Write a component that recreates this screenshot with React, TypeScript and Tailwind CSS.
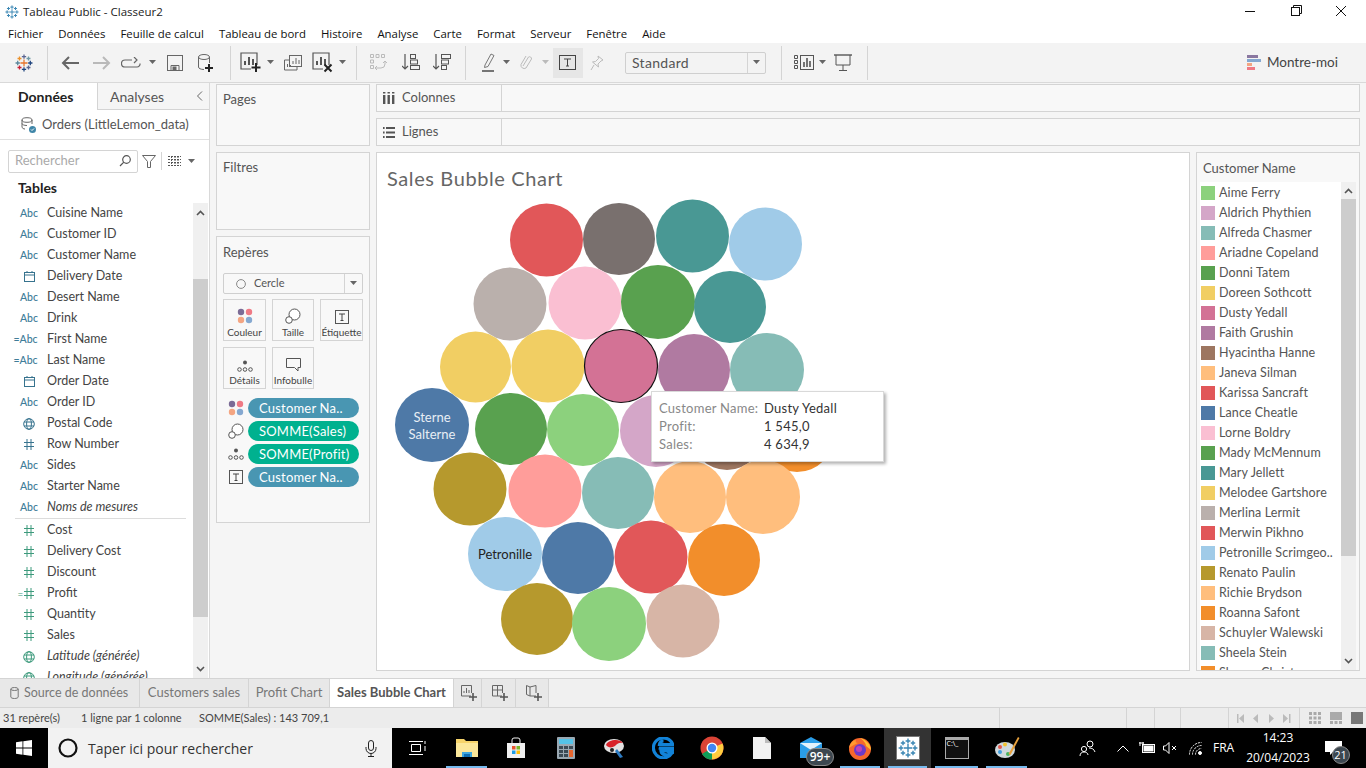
import React from 'react';

const tb = "font-['Lato','Liberation_Sans',sans-serif]";
const ui = "font-['Open_Sans','Liberation_Sans',sans-serif]";

const fields = [
  { t: 'abc', n: 'Cuisine Name' }, { t: 'abc', n: 'Customer ID' }, { t: 'abc', n: 'Customer Name' },
  { t: 'date', n: 'Delivery Date' }, { t: 'abc', n: 'Desert Name' }, { t: 'abc', n: 'Drink' },
  { t: 'calc', n: 'First Name' }, { t: 'calc', n: 'Last Name' }, { t: 'date', n: 'Order Date' },
  { t: 'abc', n: 'Order ID' }, { t: 'geo', n: 'Postal Code' }, { t: 'num', n: 'Row Number' },
  { t: 'abc', n: 'Sides' }, { t: 'abc', n: 'Starter Name' }, { t: 'abc', n: 'Noms de mesures', i: true },
];
const measures = [
  { t: 'mnum', n: 'Cost' }, { t: 'mnum', n: 'Delivery Cost' }, { t: 'mnum', n: 'Discount' },
  { t: 'mcalc', n: 'Profit' }, { t: 'mnum', n: 'Quantity' }, { t: 'mnum', n: 'Sales' },
  { t: 'mgeo', n: 'Latitude (générée)', i: true }, { t: 'mgeo', n: 'Longitude (générée)', i: true },
];

const legend: [string, string][] = [
  ['Aime Ferry', '#8cd17d'], ['Aldrich Phythien', '#d4a6c8'], ['Alfreda Chasmer', '#86bcb6'],
  ['Ariadne Copeland', '#ff9d9a'], ['Donni Tatem', '#59a14f'], ['Doreen Sothcott', '#f1ce63'],
  ['Dusty Yedall', '#d37295'], ['Faith Grushin', '#b07aa1'], ['Hyacintha Hanne', '#9d7660'],
  ['Janeva Silman', '#ffbe7d'], ['Karissa Sancraft', '#e15759'], ['Lance Cheatle', '#4e79a7'],
  ['Lorne Boldry', '#fabfd2'], ['Mady McMennum', '#59a14f'], ['Mary Jellett', '#499894'],
  ['Melodee Gartshore', '#f1ce63'], ['Merlina Lermit', '#bab0ac'], ['Merwin Pikhno', '#e15759'],
  ['Petronille Scrimgeo..', '#a0cbe8'], ['Renato Paulin', '#b6992d'], ['Richie Brydson', '#ffbe7d'],
  ['Roanna Safont', '#f28e2b'], ['Schuyler Walewski', '#d7b5a6'], ['Sheela Stein', '#86bcb6'],
  ['Sharon Christ..', '#f28e2b'],
];

// bubbles in page coordinates, the chart svg starts at 377,153
const bubbles: [number, number, number, string][] = [
  [546.5, 240, 36.5, '#e15759'], [619, 239, 36, '#79706e'], [692.5, 236, 36.5, '#499894'], [765.5, 244, 36.5, '#a0cbe8'],
  [510, 304, 36.5, '#bab0ac'], [585, 303, 36.5, '#fabfd2'], [658, 302, 37, '#59a14f'], [730, 307, 36, '#499894'],
  [475.5, 367, 35.5, '#f1ce63'], [548, 366, 36.5, '#f1ce63'], [694, 370, 36, '#b07aa1'], [767, 370, 37, '#86bcb6'],
  [432, 425, 37, '#4e79a7'], [511, 429, 36, '#59a14f'], [583, 430, 36, '#8cd17d'], [656, 431, 36, '#d4a6c8'],
  [727, 434, 36, '#9d7660'], [797, 435, 37, '#f28e2b'],
  [470, 489, 36.5, '#b6992d'], [545, 491, 36.5, '#ff9d9a'], [618, 493, 36, '#86bcb6'], [690, 497, 36, '#ffbe7d'], [763, 497, 37, '#ffbe7d'],
  [505, 554, 37, '#a0cbe8'], [578, 558, 36, '#4e79a7'], [651, 557, 36.5, '#e15759'], [724, 560, 36, '#f28e2b'],
  [537, 619, 36, '#b6992d'], [609, 624, 37, '#8cd17d'], [683, 621, 36.5, '#d7b5a6'],
];

const Caret = ({ c = '#666' }: { c?: string }) => (
  <svg width="8" height="5" viewBox="0 0 8 5"><path d="M0 0h7L3.500 4z" fill={c} /></svg>
);

const Cross = ({ x, y, s, c }: { x: number; y: number; s: number; c: string }) => (
  <path d={`M${x - s} ${y}H${x + s}M${x} ${y - s}V${y + s}`} stroke={c} strokeWidth="1.4" fill="none" />
);

const TableauLogo = ({ size = 18, mono }: { size?: number; mono?: string }) => (
  <svg width={size} height={size} viewBox="0 0 20 20">
    <Cross x={10} y={10} s={4} c={mono || '#e8762c'} />
    <Cross x={10} y={3} s={2.4} c={mono || '#5b6591'} />
    <Cross x={10} y={17} s={2.4} c={mono || '#1f447e'} />
    <Cross x={3} y={10} s={2.4} c={mono || '#59879b'} />
    <Cross x={17} y={10} s={2.4} c={mono || '#1f447e'} />
    <Cross x={5} y={5} s={2.2} c={mono || '#eb912b'} />
    <Cross x={15} y={5} s={2.2} c={mono || '#7099a6'} />
    <Cross x={5} y={15} s={2.2} c={mono || '#c72035'} />
    <Cross x={15} y={15} s={2.2} c={mono || '#5b6591'} />
  </svg>
);

const BarsBox = ({ extra }: { extra?: 'plus' | 'x' }) => (
  <svg width="22" height="24" viewBox="0 0 22 24" fill="none">
    <path d="M17 14V2H1v16h10" stroke="#555" strokeWidth="1.2" />
    <path d="M5 14v-4M9 14V6M13 14V8" stroke="#555" strokeWidth="2" />
    {extra === 'plus' && <path d="M16 12v9M11.500 16.500h9" stroke="#222" strokeWidth="2" />}
    {extra === 'x' && <path d="M12.500 13.500l7 7M19.500 13.500l-7 7" stroke="#222" strokeWidth="2" />}
  </svg>
);

const Divider = () => <div className="w-px h-[34px] bg-[#d4d4d4] shrink-0" />;

const FieldIcon = ({ t }: { t: string }) => {
  const m = t.startsWith('m');
  const c = m ? '#3d9a7c' : '#37738e';
  const k = m ? t.slice(1) : t;
  if (k === 'abc') return <span className={`${tb} text-[10.5px] font-medium text-[#3f7d99]`}>Abc</span>;
  if (t === 'calc') return <span className={`${tb} text-[10.5px] font-medium text-[#3f7d99] -ml-[7px]`}>=Abc</span>;
  if (k === 'date') return (
    <svg width="11" height="11" viewBox="0 0 11 11" fill="none" stroke={c}><rect x="0.5" y="1.5" width="10" height="9" /><path d="M0.5 4h10M3 0v2M8 0v2" /></svg>
  );
  if (k === 'geo') return (
    <svg width="12" height="12" viewBox="0 0 12 12" fill="none" stroke={c}><circle cx="6" cy="6" r="5.3" /><ellipse cx="6" cy="6" rx="2.4" ry="5.3" /><path d="M1 4h10M1 8h10" /></svg>
  );
  return (
    <span className="flex items-center gap-[1px]">
      {k === 'calc' && <span className="-ml-[6px] text-[10px] leading-none" style={{ color: c }}>=</span>}
      <svg width="10" height="11" viewBox="0 0 10 11" fill="none" stroke={c}><path d="M3 0v11M7 0v11M0 3.5h10M0 7.5h10" /></svg>
    </span>
  );
};

const ScrollArrow = ({ up }: { up?: boolean }) => (
  <svg width="9" height="6" viewBox="0 0 9 6" fill="none" stroke="#555" strokeWidth="1.6"><path d={up ? 'M1 5l3.5-3.5L8 5' : 'M1 1l3.5 3.5L8 1'} /></svg>
);

const Dots = () => (
  <svg width="16" height="16" viewBox="0 0 16 16"><circle cx="4" cy="4" r="3.2" fill="#7b6b96" /><circle cx="12" cy="4" r="3.2" fill="#ef7a85" /><circle cx="4" cy="12" r="3.2" fill="#f4a582" /><circle cx="12" cy="12" r="3.2" fill="#85a8d0" /></svg>
);
const SizeIcon = () => (
  <svg width="16" height="16" viewBox="0 0 16 16" fill="none" stroke="#555"><circle cx="9.5" cy="6.5" r="5.5" fill="#fff" /><circle cx="4" cy="12" r="3.3" fill="#fff" /></svg>
);
const LabelIcon = () => (
  <svg width="14" height="14" viewBox="0 0 14 14" fill="none"><rect x="0.5" y="0.5" width="13" height="13" stroke="#555" /><path d="M4 4h6M7 4v6.5M5.5 10.5h3" stroke="#444" /></svg>
);
const DetailIcon = () => (
  <svg width="16" height="12" viewBox="0 0 16 12" fill="none"><circle cx="8" cy="2.5" r="2" fill="#555" /><circle cx="2.5" cy="9.5" r="1.8" stroke="#555" /><circle cx="8" cy="9.5" r="1.8" stroke="#555" /><circle cx="13.5" cy="9.5" r="1.8" stroke="#555" /></svg>
);
const TipIcon = () => (
  <svg width="15" height="14" viewBox="0 0 15 14" fill="none" stroke="#555"><path d="M0.5 0.5h14v9h-2.5v3.5l-3.5-3.5h-8z" /></svg>
);

const Mark = ({ label, children, cls }: { label: string; children: React.ReactNode; cls: string }) => (
  <div className={`${cls} h-[42px] border border-[#d4d4d4] flex flex-col items-center`}>
    <div className="h-[24px] flex items-end">{children}</div>
    <span className="text-[10px] text-[#444] mt-[2px] leading-[13px] whitespace-nowrap">{label}</span>
  </div>
);

const Pill = ({ icon, label, green }: { icon: React.ReactNode; label: string; green?: boolean }) => (
  <div className="flex items-center h-[20px] mb-[3px]">
    <div className="w-[25px] flex justify-center">{icon}</div>
    <div className={`w-[111px] h-[20px] rounded-full px-[11px] text-[13px] leading-[20px] text-white whitespace-nowrap tracking-[0.2px] ${green ? 'bg-[#00b18f]' : 'bg-[#4996b2]'}`}>{label}</div>
  </div>
);

const Panel = ({ title, cls }: { title: string; cls: string }) => (
  <div className={`${cls} bg-[#f8f8f8] border border-[#d4d4d4] px-[6px] pt-[5px] text-[13px] text-[#555]`}>{title}</div>
);

const Shelf = ({ label, icon }: { label: string; icon: React.ReactNode }) => (
  <div className="h-[28px] flex bg-[#f8f8f8] border border-[#d4d4d4]">
    <div className="w-[125px] border-r border-[#d4d4d4] flex items-center pl-[6px] gap-[7px] text-[13px] text-[#555]">{icon}{label}</div>
  </div>
);

const TaskIcon = ({ children, w, active, line }: { children: React.ReactNode; w: string; active?: boolean; line?: boolean }) => (
  <div className={`${w} relative h-full flex items-center justify-center shrink-0 ${active ? 'bg-[#333333]' : ''}`}>
    {children}
    {line && <div className="absolute bottom-0 left-[4px] right-[4px] h-[2px] bg-[#76b9ed]" />}
  </div>
);

export default function App() {
  return (
    <div className={`w-[1366px] h-[768px] overflow-hidden bg-[#f5f5f5] flex flex-col ${tb}`}>
      {/* title bar */}
      <div className={`h-[22px] pt-[2px] bg-white flex items-center shrink-0 ${ui}`}>
        <div className="w-[23px] flex justify-center"><TableauLogo size={14} mono="#3b87b4" /></div>
        <span className="text-[11.5px] text-[#222]">Tableau Public - Classeur2</span>
        <div className="ml-auto flex items-center -mt-[2px]">
          <svg width="46" height="12" viewBox="0 0 46 12" fill="none" stroke="#111"><path d="M18 6.5h10" /></svg>
          <svg width="46" height="12" viewBox="0 0 46 12" fill="none" stroke="#111"><rect x="18.5" y="2.5" width="8" height="8" /><path d="M20.5 2.5v-2h8v8h-2" /></svg>
          <svg width="46" height="12" viewBox="0 0 46 12" fill="none" stroke="#111" className="mr-[1px]"><path d="M17 1l10 10M27 1L17 11" /></svg>
        </div>
      </div>
      {/* menu */}
      <div className={`h-[21px] pt-[2px] bg-white flex items-center pl-[8px] gap-[15px] text-[11.4px] text-[#111] shrink-0 ${ui}`}>
        {['Fichier', 'Données', 'Feuille de calcul', 'Tableau de bord', 'Histoire', 'Analyse', 'Carte', 'Format', 'Serveur', 'Fenêtre', 'Aide'].map(m => <span key={m}>{m}</span>)}
      </div>
      {/* toolbar */}
      <div className="h-[40px] bg-[#f3f3f3] flex items-center shrink-0 border-b border-[#d9d9d9]">
        <div className="w-[47px] flex justify-center"><TableauLogo /></div>
        <Divider />
        <div className="w-[44px] flex justify-center">
          <svg width="18" height="14" viewBox="0 0 18 14" fill="none" stroke="#666" strokeWidth="2"><path d="M18 7H2M8 1L2 7l6 6" /></svg>
        </div>
        <div className="w-[20px] flex justify-center">
          <svg width="18" height="14" viewBox="0 0 18 14" fill="none" stroke="#b9b9b9" strokeWidth="2"><path d="M0 7h16M10 1l6 6-6 6" /></svg>
        </div>
        <div className="w-[37px] flex justify-center">
          <svg width="20" height="12" viewBox="0 0 20 12" fill="none" stroke="#666" strokeWidth="1.2"><path d="M11 3H4a3 3 0 000 7h12a3 3 0 003-3.5M13 0l3 3-3 3" /></svg>
        </div>
        <div className="w-[8px] flex justify-center"><Caret /></div>
        <div className="w-[36px] flex justify-center">
          <svg width="16" height="16" viewBox="0 0 16 16" fill="none" stroke="#666"><rect x="0.5" y="0.5" width="15" height="15" /><path d="M4 15.5v-5h8v5" /><rect x="6" y="12" width="3" height="3" fill="#666" /></svg>
        </div>
        <div className="w-[26px] flex justify-center">
          <svg width="16" height="18" viewBox="0 0 16 18" fill="none"><ellipse cx="6" cy="3" rx="5.5" ry="2.5" stroke="#666" /><path d="M.5 3v10c0 1.400 2.200 2.500 5.500 2.500M11.500 3v6" stroke="#666" /><path d="M11 10v8M7 14h8" stroke="#222" strokeWidth="2" /></svg>
        </div>
        <div className="w-[11px]" />
        <Divider />
        <div className="w-[36px] pl-[3px] flex justify-center"><BarsBox extra="plus" /></div>
        <div className="w-[8px] flex justify-center"><Caret /></div>
        <div className="w-[36px] flex justify-center">
          <svg width="18" height="16" viewBox="0 0 18 16" fill="none" stroke="#666"><rect x="5.5" y="0.5" width="12" height="11" fill="#f3f3f3" /><path d="M9 9V6M12 9V3M15 9V5" /><path d="M5 5H.5v10H13v-3" /><path d="M3.5 12v-3M6.5 12v-2" /></svg>
        </div>
        <div className="w-[24px] flex justify-center"><BarsBox extra="x" /></div>
        <div className="w-[8px] ml-[4px] flex justify-center"><Caret /></div>
        <div className="w-[9px]" />
        <Divider />
        <div className="w-[43px] flex justify-center">
          <svg width="17" height="17" viewBox="0 0 17 17" fill="none" stroke="#bbb"><path d="M0.5 0.5h3v3h-3zM6 .5h3v3H6zM11.500.5h3v3h-3zM.5 6h3v3h-3zM.5 11.500h3v3h-3z" /><path d="M5 14h6a4 4 0 004-4V7M13 9l2-2 2 2M7 12l-2 2 2 2" /></svg>
        </div>
        <div className="w-[22px] flex justify-center">
          <svg width="18" height="17" viewBox="0 0 18 17" fill="none" stroke="#555"><path d="M3 0v15M0 12l3 3 3-3" strokeWidth="1.2" /><rect x="8.5" y="0.5" width="5" height="4" /><rect x="8.5" y="6" width="7" height="4" /><rect x="8.5" y="11.5" width="9" height="4" /></svg>
        </div>
        <div className="w-[40px] flex justify-center">
          <svg width="18" height="17" viewBox="0 0 18 17" fill="none" stroke="#555"><path d="M3 0v15M0 12l3 3 3-3" strokeWidth="1.2" /><rect x="8.5" y="0.5" width="9" height="4" /><rect x="8.5" y="6" width="7" height="4" /><rect x="8.5" y="11.5" width="5" height="4" /></svg>
        </div>
        <div className="w-[3px]" />
        <Divider />
        <div className="w-[35px] flex justify-end pr-[4px]">
          <svg width="16" height="19" viewBox="0 0 16 19" fill="none"><path d="M4 12L10 1l3 1.500-6 11-3.500 1z" stroke="#777" /><path d="M1 18h12" stroke="#555" strokeWidth="1.6" /></svg>
        </div>
        <div className="w-[8px] ml-[2px] flex justify-center"><Caret /></div>
        <div className="w-[31px] flex justify-center">
          <svg width="13" height="17" viewBox="0 0 13 17" fill="none" stroke="#bbb"><path d="M3 12L8.500 3a2 2 0 013 2L6 14a3.300 3.300 0 01-5-3.500L6 2" /></svg>
        </div>
        <div className="w-[8px] flex justify-center"><Caret c="#bbb" /></div>
        <div className="w-[3px]" />
        <div className="w-[30px] h-[30px] bg-[#e6e6e6] flex items-center justify-center">
          <svg width="18" height="16" viewBox="0 0 18 16" fill="none"><rect x="0.5" y="0.5" width="16" height="14" stroke="#444" /><path d="M5 4h7M8.500 4v7M7 11h3" stroke="#444" /></svg>
        </div>
        <div className="w-[28px] flex justify-center">
          <svg width="14" height="16" viewBox="0 0 14 16" fill="none" stroke="#bbb"><path d="M8 1l5 4-2 1-3 3 .5 3-6-5 3-.5 3-3zM4 10L1 15" /></svg>
        </div>
        <div className="w-[14px]" />
        <div className="w-[141px] h-[22px] bg-[#f3f3f3] border border-[#cfcfcf] rounded-[2px] flex items-center text-[14px] text-[#555] tracking-[0.3px]">
          <span className="flex-1 pl-[6px]">Standard</span>
          <div className="w-[18px] h-full border-l border-[#d4d4d4] flex items-center justify-center"><Caret /></div>
        </div>
        <div className="w-[15px]" />
        <Divider />
        <div className="w-[30px] ml-[7px] flex justify-center">
          <svg width="20" height="15" viewBox="0 0 20 15" fill="none" stroke="#555"><path d="M.5 .5h3v3h-3zM.5 5.500h3v3h-3zM.5 10.500h3v3h-3z" /><rect x="6.5" y="0.5" width="13" height="14" /><path d="M10 12V7M13 12V3M16 12V6" strokeWidth="1.6" /></svg>
        </div>
        <div className="w-[8px] flex justify-center"><Caret /></div>
        <div className="w-[30px] ml-[1px] flex justify-center">
          <svg width="18" height="17" viewBox="0 0 18 17" fill="none" stroke="#555"><path d="M0 1h18" strokeWidth="1.4" /><path d="M2 1v10h14V1M9 11v5M5 16.500h8" /></svg>
        </div>
        <div className="w-[9px]" />
        <Divider />
        <div className="ml-auto flex items-center mr-[28px] gap-[6px]">
          <div className="w-[14px] flex flex-col gap-[1px]">
            <div className="w-[11px] h-[3px] bg-[#8a77a0]" /><div className="w-[14px] h-[3px] bg-[#85a8d0]" /><div className="w-[5px] h-[3px] bg-[#f4a582]" /><div className="w-[8px] h-[3px] bg-[#ef7a85]" />
          </div>
          <span className="text-[13.5px] text-[#444]">Montre-moi</span>
        </div>
      </div>
      {/* main */}
      <div className="h-[595px] flex shrink-0">
        {/* data pane */}
        <div className="w-[210px] bg-white border-r border-[#d9d9d9] flex flex-col shrink-0">
          <div className="h-[27px] flex items-center text-[14px]">
            <div className="w-[98px] h-full flex items-center pl-[18px] font-bold text-[#222] border-r border-[#d4d4d4]">Données</div>
            <div className="flex-1 h-full flex items-center justify-between pl-[12px] pr-[6px] bg-[#f5f5f5] border-b border-[#d4d4d4] text-[#555]">
              Analyses
              <svg width="7" height="10" viewBox="0 0 7 10" fill="none" stroke="#666"><path d="M6 .5L1.500 5 6 9.500" /></svg>
            </div>
          </div>
          <div className="h-[30px] flex items-center pl-[20px] gap-[5px] border-b border-[#e0e0e0] text-[13px] text-[#555] whitespace-nowrap">
            <svg width="17" height="16" viewBox="0 0 17 16" fill="none"><ellipse cx="7" cy="3" rx="5" ry="2.300" stroke="#666" /><path d="M2 3v7c0 1 1.500 2 3 2M12 3v4M2 6.500c0 1 2 2 5 2" stroke="#666" /><circle cx="12.500" cy="12.500" r="3.500" fill="#3f86a8" /><path d="M11 12.500l1 1 2-2" stroke="#fff" /></svg>
            Orders (LittleLemon_data)
          </div>
          <div className="h-[40px] flex items-center pl-[8px] pt-[2px]">
            <div className="w-[130px] h-[23px] border border-[#d4d4d4] rounded-[2px] flex items-center justify-between px-[6px] text-[13px] text-[#aaa]">
              Rechercher
              <svg width="12" height="12" viewBox="0 0 12 12" fill="none" stroke="#555" strokeWidth="1.2"><circle cx="7.500" cy="4.500" r="3.800" /><path d="M4.800 7.200L1 11" /></svg>
            </div>
            <svg width="14" height="13" viewBox="0 0 14 13" fill="none" stroke="#666" className="ml-[4px]"><path d="M.5.5h13L8.500 6.500v6h-3v-6z" /></svg>
            <div className="w-px h-[18px] bg-[#d4d4d4] ml-[5px]" />
            <svg width="13" height="10" viewBox="0 0 13 10" fill="none" stroke="#555" className="ml-[6px]"><path d="M0 .5h13M0 3.500h13M0 6.500h13M0 9.500h13M3.500 0v10M7 0v10M10 0v10" strokeDasharray="2 1" /></svg>
            <div className="ml-[7px]"><Caret /></div>
          </div>
          <div className="h-[21px] flex items-center pl-[18px] text-[14px] font-bold text-[#222] -mt-[3px] mb-[5px]">Tables</div>
          <div className="flex flex-1 min-h-0 pr-[1px]">
            <div className="flex-1 overflow-hidden text-[12.5px] text-[#444] pl-[15px]">
              {fields.map(f => (
                <div key={f.n} className="h-[21px] flex items-center">
                  <div className="w-[28px] flex justify-center"><FieldIcon t={f.t} /></div>
                  <span className={`ml-[4px] whitespace-nowrap ${f.i ? 'italic' : ''}`}>{f.n}</span>
                </div>
              ))}
              <div className="h-px mb-[1px] bg-[#dcdcdc] mr-[7px]" />
              {measures.map(f => (
                <div key={f.n} className="h-[21px] flex items-center">
                  <div className="w-[28px] flex justify-center"><FieldIcon t={f.t} /></div>
                  <span className={`ml-[4px] whitespace-nowrap ${f.i ? 'italic' : ''}`}>{f.n}</span>
                </div>
              ))}
            </div>
            <div className="w-[15px] bg-[#f0f0f0] flex flex-col items-center shrink-0">
              <div className="h-[76px] w-full pt-[7px] flex justify-center"><ScrollArrow up /></div>
              <div className="h-[338px] w-full bg-[#cdcdcd]" />
              <div className="flex-1 w-full flex items-end justify-center pb-[6px]"><ScrollArrow /></div>
            </div>
          </div>
        </div>
        {/* shelves column */}
        <div className="w-[166px] px-[6px] pt-[1px] flex flex-col gap-[6px] shrink-0">
          <Panel title="Pages" cls="h-[62px]" />
          <Panel title="Filtres" cls="h-[78px]" />
          <div className="h-[287px] bg-[#f8f8f8] border border-[#d4d4d4] px-[6px] pt-[7px]">
            <div className="text-[13px] text-[#555] leading-[16px]">Repères</div>
            <div className="h-[21px] mt-[13px] border border-[#cfcfcf] rounded-[2px] flex items-center text-[11px] text-[#555]">
              <svg width="10" height="10" viewBox="0 0 10 10" fill="none" stroke="#888" className="ml-[12px] mr-[8px]"><circle cx="5" cy="5" r="4.400" /></svg>
              Cercle
              <div className="ml-auto w-[18px] h-full border-l border-[#d4d4d4] flex items-center justify-center"><Caret /></div>
            </div>
            <div className="flex gap-[6px] mt-[5px]">
              <Mark label="Couleur" cls="w-[43px]"><Dots /></Mark>
              <Mark label="Taille" cls="w-[42px]"><SizeIcon /></Mark>
              <Mark label="Étiquette" cls="w-[43px]"><LabelIcon /></Mark>
            </div>
            <div className="flex gap-[6px] mt-[6px]">
              <Mark label="Détails" cls="w-[43px]"><DetailIcon /></Mark>
              <Mark label="Infobulle" cls="w-[42px]"><TipIcon /></Mark>
            </div>
            <div className="mt-[9px]">
              <Pill icon={<Dots />} label="Customer Na.." />
              <Pill icon={<SizeIcon />} label="SOMME(Sales)" green />
              <Pill icon={<DetailIcon />} label="SOMME(Profit)" green />
              <Pill icon={<LabelIcon />} label="Customer Na.." />
            </div>
          </div>
        </div>
        {/* view column */}
        <div className="flex-1 pt-[1px] pr-[6px] flex flex-col gap-[6px] min-w-0">
          <Shelf label="Colonnes" icon={<svg width="12" height="12" viewBox="0 0 12 12" fill="#555"><path d="M0 3h2.400v9H0zM4.500 3h2.400v9H4.500zM9 3h2.400v9H9zM0 0h2.400v1.500H0zM4.500 0h2.400v1.500H4.500zM9 0h2.400v1.500H9z" /></svg>} />
          <Shelf label="Lignes" icon={<svg width="12" height="11" viewBox="0 0 12 11" fill="#555"><path d="M3 0h9v2H3zM3 4.500h9v2H3zM3 9h9v2H3zM0 0h1.600v2H0zM0 4.500h1.600v2H0zM0 9h1.600v2H0z" /></svg>} />
          <div className="flex-1 flex gap-[6px] min-h-0 mb-[7px]">
            <div className="w-[814px] bg-white border border-[#d4d4d4] relative shrink-0">
              <div className="pl-[10px] pt-[12px] text-[20px] leading-[26px] text-[#666] tracking-[0.6px]">Sales Bubble Chart</div>
              <svg width="812" height="517" viewBox="377 153 812 517" className="absolute left-0 top-0">
                {bubbles.map((b, i) => <circle key={i} cx={b[0]} cy={b[1]} r={b[2]} fill={b[3]} />)}
                <circle cx="621" cy="366" r="36.5" fill="#d37295" stroke="#111" strokeWidth="1.2" />
                <text x="432" y="422" textAnchor="middle" fontSize="13" fill="#e8eef5">Sterne</text>
                <text x="432" y="439" textAnchor="middle" fontSize="13" fill="#e8eef5">Salterne</text>
                <text x="505" y="559" textAnchor="middle" fontSize="13" fill="#222">Petronille</text>
              </svg>
              {/* tooltip */}
              <div className="absolute left-[274px] top-[238px] w-[233px] h-[71px] bg-white border border-[#d9d9d9] shadow-[2px_2px_3px_rgba(0,0,0,0.3)] pl-[7px] pt-[7px] text-[13px] leading-[18px] tracking-[0.25px]">
                <div className="flex"><span className="w-[105px] text-[#888]">Customer Name:</span><span className="text-[#333]">Dusty Yedall</span></div>
                <div className="flex"><span className="w-[105px] text-[#888]">Profit:</span><span className="text-[#333]">1 545,0</span></div>
                <div className="flex"><span className="w-[105px] text-[#888]">Sales:</span><span className="text-[#333]">4 634,9</span></div>
              </div>
            </div>
            <div className="flex-1 bg-[#f8f8f8] border border-[#d4d4d4] pl-[3px] pr-[3px] flex flex-col min-w-0">
              <div className="h-[29px] pt-[2px] flex items-center pl-[3px] text-[13px] text-[#555] shrink-0">Customer Name</div>
              <div className="flex-1 bg-white flex min-h-0">
                <div className="flex-1 overflow-hidden pt-[1px]">
                  {legend.map(([n, c]) => (
                    <div key={n} className="h-[20px] flex items-center text-[12.5px] text-[#555] whitespace-nowrap tracking-[0.1px]">
                      <div className="w-[14px] h-[14px] ml-[1px] mr-[4px] shrink-0" style={{ backgroundColor: c }} />
                      {n}
                    </div>
                  ))}
                </div>
                <div className="w-[15px] bg-[#f0f0f0] flex flex-col items-center shrink-0">
                  <div className="h-[17px] w-full pt-[6px] flex justify-center"><ScrollArrow up /></div>
                  <div className="h-[357px] w-full bg-[#cdcdcd]" />
                  <div className="flex-1 w-full flex items-end justify-center pb-[6px]"><ScrollArrow /></div>
                </div>
              </div>
            </div>
          </div>
        </div>
      </div>
      {/* sheet tabs */}
      <div className="h-[30px] flex bg-[#f0f0f0] border-t border-b border-[#d4d4d4] text-[13px] text-[#777] shrink-0">
        <div className="w-[140px] flex items-center pl-[10px] gap-[5px] bg-[#e8e8e8] border-r border-[#d4d4d4] whitespace-nowrap">
          <svg width="9" height="12" viewBox="0 0 9 12" fill="none" stroke="#777"><ellipse cx="4.500" cy="2" rx="3.700" ry="1.500" /><path d="M.8 2v8c0 .8 1.600 1.500 3.700 1.500S8.200 10.800 8.200 10V2" /></svg>
          <span className="text-[12.5px]">Source de données</span>
        </div>
        <div className="w-[109px] flex items-center justify-center bg-[#e8e8e8] border-r border-[#d4d4d4]">Customers sales</div>
        <div className="w-[81px] flex items-center justify-center bg-[#e8e8e8] border-r border-[#d4d4d4]">Profit Chart</div>
        <div className="w-[124px] flex items-center justify-center bg-white font-bold text-[#555] border-r border-[#d4d4d4]">Sales Bubble Chart</div>
        {[['sheet', 'w-[28px]'], ['dash', 'w-[34px]'], ['story', 'w-[33px]']].map(([k, w]) => (
          <div key={k} className={`${w} pl-[3px] flex items-center justify-center bg-[#e8e8e8] border-r border-[#d4d4d4]`}>
            <svg width="16" height="16" viewBox="0 0 16 16" fill="none">
              {k === 'sheet' && <path d="M10 11H.5V.5h10V8M3 8V6M5.500 8V3M8 8V5" stroke="#666" />}
              {k === 'dash' && <path d="M10 11H.5V.5h10V8M.5 5h10M5.500 .5V11" stroke="#666" />}
              {k === 'story' && <path d="M10 11H4L.5 9.500v-9l3.500 1.500 6-1.500V8M4 2v9" stroke="#666" />}
              <path d="M12 8v8M8 12h8" stroke="#555" strokeWidth="1.600" />
            </svg>
          </div>
        ))}
      </div>
      {/* status bar */}
      <div className="h-[20px] flex items-center bg-[#ececec] text-[11px] text-[#444] pl-[3px] shrink-0">
        <span className="w-[78px]">31 repère(s)</span>
        <span className="w-[118px]">1 ligne par 1 colonne</span>
        <span className="w-[800px]">SOMME(Sales) : 143 709,1</span>
        {['w-[127px]', 'w-[28px]', 'w-[26px]', 'w-[48px]'].map((w, i) => <div key={i} className={`${w} h-full border-l border-[#d4d4d4]`} />)}
        <div className="w-[71px] h-full border-l border-[#d4d4d4] flex items-center justify-center">
          <svg width="54" height="9" viewBox="0 0 54 9" fill="#bbb"><path d="M0 0h1.500v9H0zM7 0v9L2 4.500zM21 0v9L16 4.500zM32 0v9l5-4.500zM46 0v9l5-4.500zM52 0h1.500v9H52z" /></svg>
        </div>
        <div className="flex-1 h-full border-l border-[#d4d4d4] flex items-center gap-[9px] pl-[9px]">
          <svg width="12" height="12" viewBox="0 0 12 12" fill="#aaa"><path d="M0 0h3v3H0zM4.500 0h3v3h-3zM9 0h3v3H9zM0 4.500h3v3H0zM4.500 4.500h3v3h-3zM9 4.500h3v3H9zM0 9h3v3H0zM4.500 9h3v3h-3zM9 9h3v3H9z" /></svg>
          <svg width="12" height="12" viewBox="0 0 12 12" fill="#aaa"><path d="M0 0h12v8H0zM0 9h3v3H0zM4.500 9h3v3h-3zM9 9h3v3H9z" /></svg>
          <div className="w-[12px] h-[12px] bg-[#777]" />
        </div>
      </div>
      {/* taskbar */}
      <div className={`h-[40px] bg-black flex items-center text-white shrink-0 ${ui}`}>
        <div className="w-[48px] flex justify-center">
          <svg width="16" height="16" viewBox="0 0 16 16" fill="#fff"><path d="M0 2.300l6.500-1v6.300H0zM7.300 1.200L16 0v7.600H7.300zM0 8.400h6.500v6.300l-6.500-1zM7.300 8.400H16V16l-8.700-1.200z" /></svg>
        </div>
        <div className="w-[344px] h-full bg-[#f2f2f2] flex items-center pl-[10px] text-[#333] text-[14px]">
          <svg width="20" height="20" viewBox="0 0 20 20" fill="none" stroke="#111" strokeWidth="2.200"><circle cx="10" cy="10" r="8.500" /></svg>
          <span className="ml-[10px]">Taper ici pour rechercher</span>
          <svg width="12" height="17" viewBox="0 0 12 17" fill="none" stroke="#222" className="ml-auto mr-[15px]"><rect x="3.500" y="0.500" width="5" height="10" rx="2.500" /><path d="M1 7v1.500a5 5 0 0010 0V7M6 13.500V16M3 16.500h6" /></svg>
        </div>
        <TaskIcon w="w-[50px]">
          <svg width="17" height="16" viewBox="0 0 17 16" fill="none" stroke="#fff"><path d="M2.500 4.500h9v7h-9zM0 1.500h14M0 14.500h14M16 1v3M16 6v5" /></svg>
        </TaskIcon>
        <TaskIcon w="w-[49px]" line>
          <svg width="22" height="20" viewBox="0 0 22 20"><path d="M0 1h8l2 2h12v16H0z" fill="#f6d46b" /><path d="M0 5h22v14H0z" fill="#fbe79a" /><path d="M6 19v-5h10v5z" fill="#3fa7e0" /><path d="M8 19v-3h6v3z" fill="#0c6db3" /></svg>
        </TaskIcon>
        <TaskIcon w="w-[50px]">
          <svg width="22" height="22" viewBox="0 0 22 22"><path d="M2 6h18v15H2z" fill="#f0f0f0" /><path d="M7 6V3a2 2 0 012-2h4a2 2 0 012 2v3" fill="none" stroke="#f0f0f0" /><path d="M7 9h3.500v3.500H7z" fill="#e8542f" /><path d="M11.500 9H15v3.500h-3.500z" fill="#7cb928" /><path d="M7 13.500h3.500V17H7z" fill="#1c9be6" /><path d="M11.500 13.500H15V17h-3.500z" fill="#fbbc09" /></svg>
        </TaskIcon>
        <TaskIcon w="w-[49px]">
          <svg width="18" height="22" viewBox="0 0 18 22"><rect width="18" height="22" rx="1" fill="#9aa8b2" /><rect x="2" y="2" width="14" height="5" fill="#54c3e8" /><path d="M2 9h4v3H2zM7 9h4v3H7zM12 9h4v3h-4zM2 13h4v3H2zM7 13h4v3H7zM2 17h4v3H2zM7 17h4v3H7z" fill="#3b4a55" /><path d="M12 13h4v7h-4z" fill="#e8662f" /></svg>
        </TaskIcon>
        <TaskIcon w="w-[49px]">
          <svg width="24" height="24" viewBox="0 0 24 24"><ellipse cx="11" cy="10" rx="10" ry="7" fill="#e2e2e2" /><path d="M3 9c2-5 13-7 17-2-4-1-6 1-8 3-3 2-7 2-9-1z" fill="#d8232a" /><path d="M14 13l6 8-3 1-5-7z" fill="#2d7cc4" /><circle cx="9" cy="14" r="2" fill="#222" /></svg>
        </TaskIcon>
        <TaskIcon w="w-[48px]">
          <svg width="22" height="22" viewBox="0 0 22 22" fill="none"><path d="M20 16a10 10 0 11.800-8.500H7.500a4 4 0 014-3.500M7 11h14.500c0 0 .5 3-2 3H9c.5 4 6 5 11 2z" stroke="#1283d8" strokeWidth="3.200" /></svg>
        </TaskIcon>
        <TaskIcon w="w-[50px]">
          <svg width="24" height="24" viewBox="0 0 24 24"><circle cx="12" cy="12" r="11.500" fill="#db4437" /><path d="M12 12L2 18a11.500 11.500 0 0010 5.500z" fill="#0f9d58" /><path d="M12 12l10.500-4.500a11.500 11.500 0 01-10.500 16z" fill="#ffcd40" /><circle cx="12" cy="12" r="5.500" fill="#fff" /><circle cx="12" cy="12" r="4.200" fill="#4285f4" /></svg>
        </TaskIcon>
        <TaskIcon w="w-[49px]">
          <svg width="18" height="22" viewBox="0 0 18 22"><path d="M0 0h12l6 6v16H0z" fill="#f2f2f2" /><path d="M12 0v6h6z" fill="#bdbdbd" /></svg>
        </TaskIcon>
        <TaskIcon w="w-[50px]">
          <div className="relative">
            <svg width="24" height="24" viewBox="0 0 24 24"><path d="M1 7l11-6 11 6v15H1z" fill="#2a9de8" /><path d="M1 7l11 7 11-7" fill="#e4f2fb" /></svg>
            <div className="absolute -right-[11px] bottom-[-6px] w-[28px] h-[18px] rounded-full bg-[#3c4750] border border-[#8a8a8a] text-[12px] font-semibold leading-[16px] text-center">99+</div>
          </div>
        </TaskIcon>
        <TaskIcon w="w-[48px]" line>
          <svg width="24" height="24" viewBox="0 0 24 24"><circle cx="12" cy="13" r="11" fill="#f5672c" /><path d="M12 2c5 1 11 6 11 12l-5-4c0-3-3-6-6-8z" fill="#ffbd2e" /><path d="M1 12c1-5 4-8 7-8-1 2 0 3 2 3-3 1-6 3-9 5z" fill="#ff9a2e" /><circle cx="12" cy="14" r="6" fill="#6c3ac8" /><circle cx="11" cy="13" r="3" fill="#c042b8" /></svg>
        </TaskIcon>
        <TaskIcon w="w-[47px]" active line>
          <div className="w-[24px] h-[24px] bg-white border border-[#777] flex items-center justify-center"><TableauLogo size={20} mono="#3b87b4" /></div>
        </TaskIcon>
        <TaskIcon w="w-[51px]" line>
          <div className="w-[24px] h-[22px] bg-[#111] border border-[#aaa] border-t-[3px] text-[7px] leading-[8px] pl-[1px]">C:\_</div>
        </TaskIcon>
        <TaskIcon w="w-[49px]" line>
          <svg width="26" height="24" viewBox="0 0 26 24"><ellipse cx="11" cy="14" rx="10" ry="8" fill="#cfd9dd" /><circle cx="6" cy="11" r="2" fill="#e2574c" /><circle cx="11" cy="8.500" r="2" fill="#f2c230" /><circle cx="6" cy="16" r="2" fill="#3f9fe0" /><circle cx="14" cy="18" r="2" fill="#46b35f" /><path d="M24 1l1.500 1-9 17-2-1z" fill="#e8a13c" /></svg>
        </TaskIcon>
        <div className="flex-1" />
        <svg width="17" height="17" viewBox="0 0 17 17" fill="none" stroke="#fff" className="mr-[21px]"><circle cx="11" cy="4" r="3" /><circle cx="5" cy="9" r="2.600" /><path d="M1 16c0-3 2-4 4-4s4 1 4 3M10 8c3 0 5 1 6 4" /></svg>
        <svg width="12" height="7" viewBox="0 0 12 7" fill="none" stroke="#fff" className="mr-[10px]"><path d="M.5 6.500L6 1l5.500 5.500" /></svg>
        <svg width="16" height="12" viewBox="0 0 16 12" fill="none" stroke="#fff" className="mr-[8px]"><rect x="3.500" y="2.500" width="12" height="8" /><rect x="5" y="4" width="9" height="5" fill="#fff" /><path d="M0 1h5M1 0v4M4 0v4" /></svg>
        <svg width="14" height="12" viewBox="0 0 14 12" fill="none" stroke="#fff" className="mr-[12px]"><path d="M.5 4h2L6 .5v11L2.500 8h-2zM9 4l4 4M13 4L9 8" /></svg>
        <svg width="14" height="13" viewBox="0 0 14 13" fill="none" stroke="#fff" className="mr-[10px]"><path d="M.5 12.500a12 12 0 0112-12M3.500 12.500a9 9 0 019-9M6.500 12.500a6 6 0 016-6" strokeDasharray="2 1" /><circle cx="11" cy="11" r="1.500" fill="#fff" /></svg>
        <span className="text-[12px] w-[22px] mr-[7px]">FRA</span>
        <div className="w-[72px] text-[12px] leading-[20px] text-center">
          <div>14:23</div>
          <div>20/04/2023</div>
        </div>
        <div className="w-[52px] pr-[14px] flex justify-center">
          <div className="relative">
            <svg width="17" height="15" viewBox="0 0 17 15" fill="#fff"><path d="M0 0h17v11H8l-3 3v-3H0z" /></svg>
            <div className="absolute -right-[8px] bottom-[-8px] w-[18px] h-[18px] rounded-full bg-[#3c4750] border border-[#8a8a8a] text-[11px] leading-[16px] text-center">21</div>
          </div>
        </div>
      </div>
    </div>
  );
}
